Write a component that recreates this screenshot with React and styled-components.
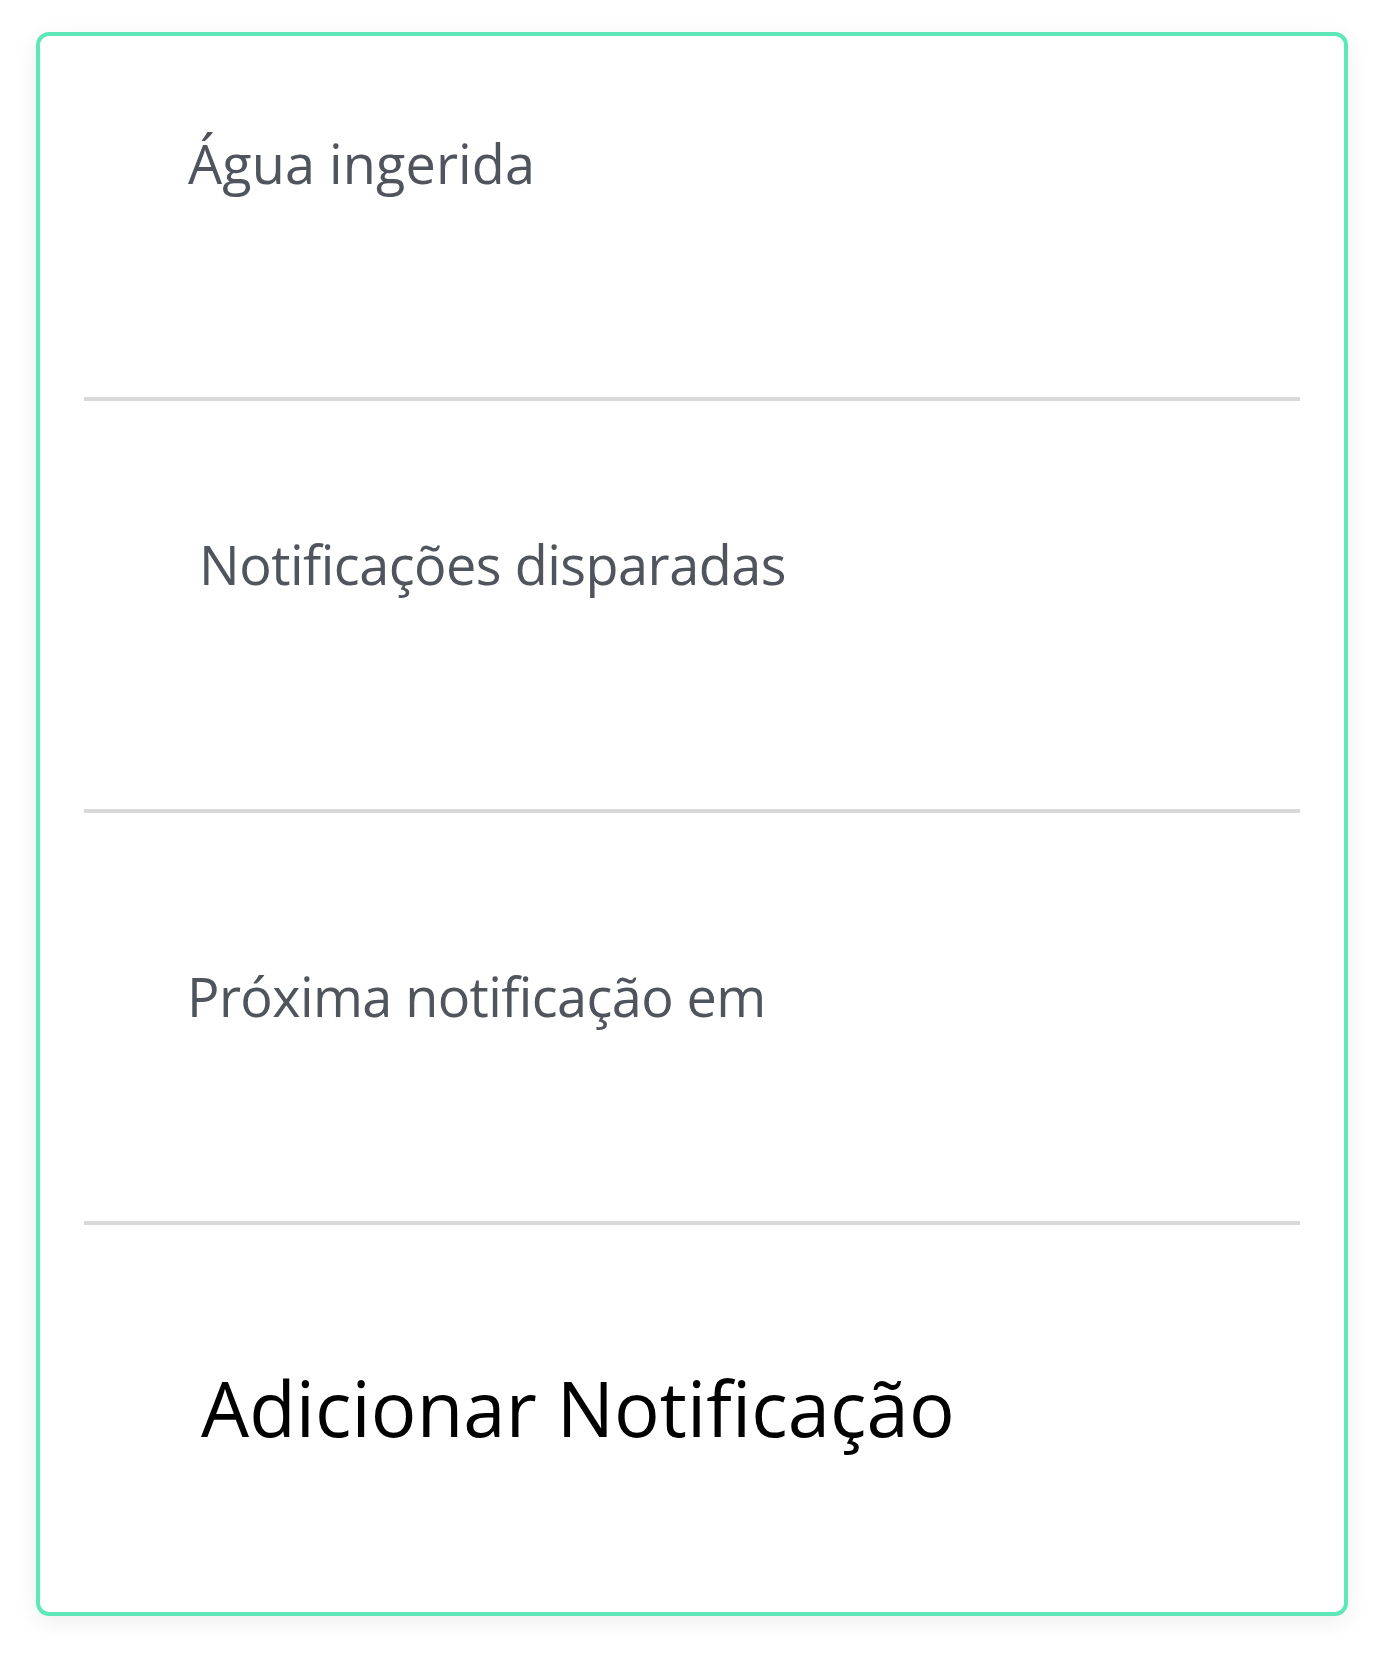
import React from "react";
import styled, { createGlobalStyle } from "styled-components";

const GlobalStyle = createGlobalStyle`
  html, body {
    margin: 0;
    padding: 0;
    background: #ffffff;
  }
  body {
    font-family: "Open Sans", "Noto Sans", "Liberation Sans", sans-serif;
  }
`;

const Page = styled.div`
  padding: 32px 36px 40px;
`;

const Card = styled.div`
  box-sizing: border-box;
  height: 1584px;
  border: 4px solid #5ee8b9;
  border-radius: 13px;
  background: #ffffff;
  box-shadow: 0 6px 22px rgba(0, 0, 0, 0.07);
  padding: 0 44px;
  display: flex;
  flex-direction: column;
`;

const Section = styled.section`
  display: flex;
  flex-direction: column;
  padding-top: ${(p) => p.$top}px;
  padding-left: ${(p) => p.$indent}px;
  flex: ${(p) => (p.$grow ? 1 : "none")};
  height: ${(p) => (p.$height ? `${p.$height}px` : "auto")};
  box-sizing: border-box;
`;

const Label = styled.h3`
  margin: 0;
  font-family: "Open Sans", "Noto Sans", sans-serif;
  font-weight: 400;
  font-size: 54px;
  line-height: 64px;
  letter-spacing: ${(p) => p.$spacing || 0}px;
  color: #4f545d;
  white-space: nowrap;
`;

const Divider = styled.hr`
  margin: 0;
  border: none;
  height: 4px;
  background: #d9d9d9;
  flex: none;
`;

const AddButton = styled.button`
  align-self: flex-start;
  margin: 0;
  padding: 0;
  border: none;
  background: transparent;
  font-family: "Open Sans", "Noto Sans", sans-serif;
  font-weight: 400;
  font-size: 76px;
  line-height: 90px;
  letter-spacing: 0.1px;
  color: #000000;
  cursor: pointer;
  white-space: nowrap;
`;

export default function App() {
  return (
    <>
      <GlobalStyle />
      <Page>
        <Card>
          <Section $top={95} $indent={104} $height={361}>
            <Label $spacing={0.1}>Água ingerida</Label>
          </Section>
          <Divider />
          <Section $top={131} $indent={115} $height={408}>
            <Label $spacing={-0.5}>Notificações disparadas</Label>
          </Section>
          <Divider />
          <Section $top={151} $indent={103} $height={408}>
            <Label $spacing={-0.6}>Próxima notificação em</Label>
          </Section>
          <Divider />
          <Section $top={138} $indent={117} $grow>
            <AddButton type="button">Adicionar Notificação</AddButton>
          </Section>
        </Card>
      </Page>
    </>
  );
}
